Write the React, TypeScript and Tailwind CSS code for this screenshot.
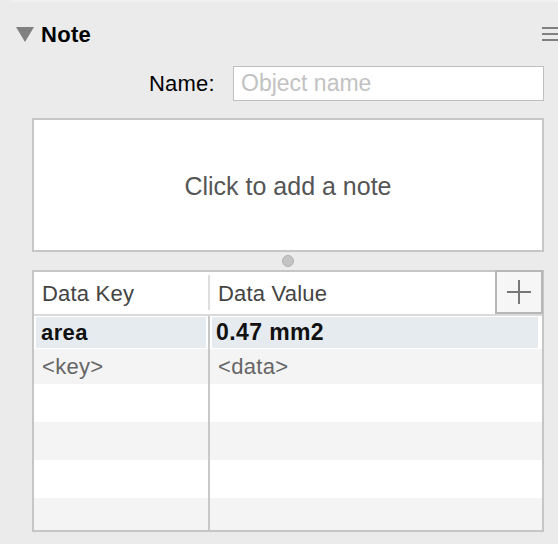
import React from "react";

const font = { fontFamily: '"Liberation Sans", Arial, Helvetica, sans-serif' };

function Row({ bg, k, v, bold, placeholder, h, highlight }: { bg: string; k?: string; v?: string; bold?: boolean; placeholder?: boolean; h: string; highlight?: boolean }) {
  const txt = bold ? "font-bold text-[#111] tracking-[0.4px]" : placeholder ? "text-[#666] tracking-[0.3px]" : "";
  return (
    <div className={`flex ${bg} ${h}`}>
      <div className="w-[176px] border-r-2 border-[#c8c8c8] flex">
        {highlight ? (
          <div className={`m-[1px_2px] flex-1 bg-[#e6ebef] flex items-center pl-[5px] text-[22px] ${txt}`}>{k}</div>
        ) : (
          <div className={`flex-1 flex items-center pl-[8px] text-[22px] ${txt}`}>{k}</div>
        )}
      </div>
      <div className="flex-1 flex">
        {highlight ? (
          <div className={`m-[1px_4px_1px_2px] flex-1 bg-[#e6ebef] flex items-center pl-[4px] text-[23px] ${txt}`}>{v}</div>
        ) : (
          <div className={`flex-1 flex items-center pl-[8px] text-[22px] ${txt}`}>{v}</div>
        )}
      </div>
    </div>
  );
}

export default function App() {
  return (
    <div className="w-[558px] h-[544px] bg-[#ebebeb] relative overflow-hidden" style={font}>
      <div className="h-[2px] ml-[12px] bg-[#f1f1f1]" />
      {/* header */}
      <div className="flex items-center h-[64px] pl-[16px] relative">
        <svg width="18" height="15" viewBox="0 0 18 15" className="mt-[1px]">
          <polygon points="0,0 18,0 9,15" fill="#808080" />
        </svg>
        <span className="ml-[7px] text-[22px] font-bold text-black tracking-[0.3px]">Note</span>
        <div className="absolute right-[-2px] top-[25px] w-[18px] flex flex-col gap-[4px]">
          <div className="h-[2px] bg-[#808080]" />
          <div className="h-[2px] bg-[#808080]" />
          <div className="h-[2px] bg-[#808080]" />
        </div>
      </div>
      {/* name row */}
      <div className="flex items-center h-[35px] ml-[149px]">
        <span className="text-[22px] text-black w-[84px] tracking-[0.2px]">Name:</span>
        <div className="w-[311px] h-[35px] bg-white border border-[#bfbfbf] flex items-center pl-[7px] text-[23px] text-[#c2c2c2]">
          Object name
        </div>
      </div>
      {/* note box */}
      <div className="mt-[17px] ml-[32px] w-[512px] h-[134px] bg-white border-2 border-[#c6c6c6] flex items-center justify-center pt-[4px] text-[25px] text-[#555]">
        Click to add a note
      </div>
      {/* splitter dot */}
      <div className="h-[18px] flex items-center pl-[282px]">
        <div className="w-[12px] h-[12px] rounded-full bg-[#c4c4c4] border border-[#b0b0b0]" />
      </div>
      {/* table */}
      <div className="ml-[32px] w-[512px] h-[262px] border-2 border-[#c6c6c6] bg-white relative flex flex-col">
        <div className="flex h-[44px] border-b-2 border-[#dadada] text-[22px] text-[#444]">
          <div className="w-[176px] flex items-center pl-[8px] relative tracking-[0.2px]">
            Data Key
            <div className="absolute right-0 top-[3px] bottom-[4px] w-[2px] bg-[#dedede]" />
          </div>
          <div className="flex-1 flex items-center pl-[8px] tracking-[0.2px]">Data Value</div>
        </div>
        <Row bg="bg-white" h="h-[33px]" k="area" v="0.47 mm2" bold highlight />
        <Row bg="bg-[#f4f4f4]" h="h-[35px]" k="<key>" v="<data>" placeholder />
        <Row bg="bg-white" h="h-[38px]" />
        <Row bg="bg-[#f4f4f4]" h="h-[38px]" />
        <Row bg="bg-white" h="h-[38px]" />
        <Row bg="bg-[#f4f4f4]" h="flex-1" />
        <div className="absolute top-[-2px] right-[-1px] w-[48px] h-[44px] bg-[#f6f6f6] border-2 border-[#b6b6b6] flex items-center justify-center">
          <svg width="24" height="24" viewBox="0 0 24 24">
            <rect x="0" y="11" width="24" height="2" fill="#777" />
            <rect x="11" y="0" width="2" height="24" fill="#777" />
          </svg>
        </div>
      </div>
    </div>
  );
}
